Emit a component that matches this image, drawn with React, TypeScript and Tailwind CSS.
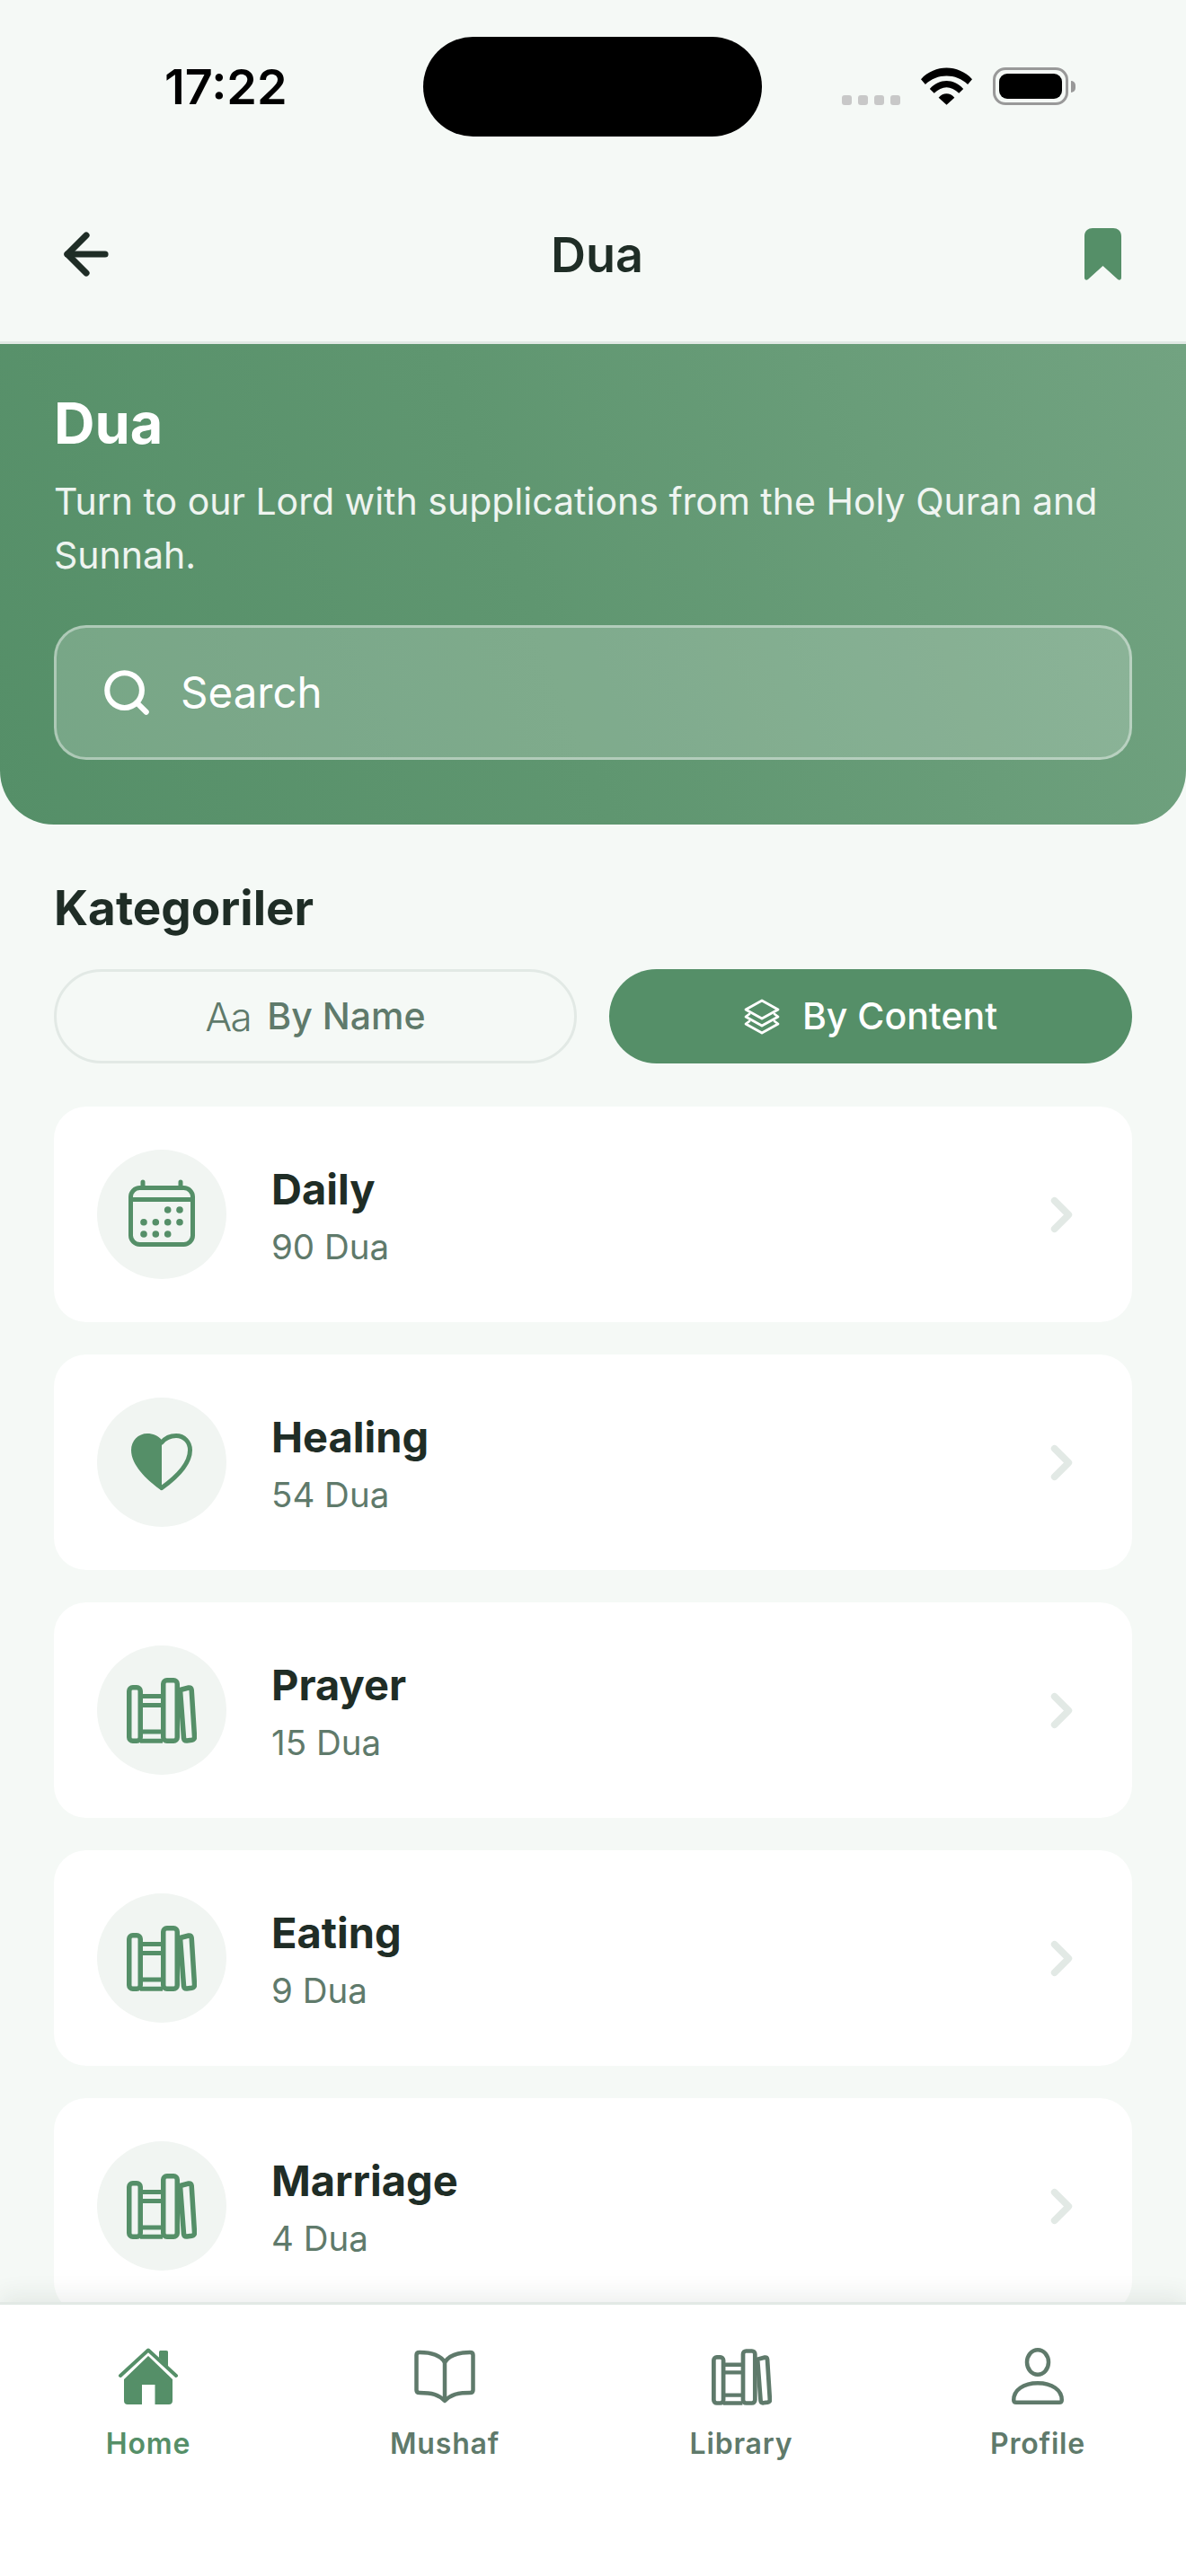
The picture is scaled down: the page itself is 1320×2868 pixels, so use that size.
import { ArrowLeft, ChevronRight, Search } from 'lucide-react';

const cards = [
  { name: 'Daily', count: '90 Dua', icon: 'calendar' },
  { name: 'Healing', count: '54 Dua', icon: 'heart' },
  { name: 'Prayer', count: '15 Dua', icon: 'books' },
  { name: 'Eating', count: '9 Dua', icon: 'books' },
  { name: 'Marriage', count: '4 Dua', icon: 'books' },
];

function CalendarIcon() {
  const dots = [
    [46.7, 35], [60, 35],
    [20, 48.7], [33.3, 48.7], [46.7, 48.7], [60, 48.7],
    [20, 62], [33.3, 62], [46.7, 62],
  ];
  return (
    <svg width="80" height="80" viewBox="0 0 80 80" fill="none" stroke="#558f68" strokeWidth="5">
      <rect x="5.5" y="10.5" width="69" height="63" rx="10" />
      <path d="M5.5 23.5H74.5" />
      <path d="M19 4V10M61 4V10" strokeLinecap="round" />
      {dots.map(([x, y]) => (
        <circle key={`${x}-${y}`} cx={x} cy={y} r="3.8" fill="#558f68" stroke="none" />
      ))}
    </svg>
  );
}

function HeartIcon() {
  return (
    <svg width="80" height="80" viewBox="0 0 80 80" fill="none">
      <path d="M40 15C36 10.500 30 8 24 8C14 8 6 16 6 26.500C6 43 23 59 37 69.500C38.800 70.900 40 71 40 71Z" fill="#558f68" />
      <path d="M40 18C44 13 49 10.500 56 10.500C65 10.500 71.500 17.500 71.500 26.500C71.500 42 56 57 40 68.500" stroke="#558f68" strokeWidth="5" strokeLinecap="round" />
    </svg>
  );
}

function BooksIcon({ color, width, height }: { color: string; width: number; height: number }) {
  return (
    <svg width={width} height={height} viewBox="0 0 78 73" fill="none" stroke={color} strokeWidth="5.500" strokeLinejoin="round">
      <rect x="2.750" y="10.750" width="12.500" height="59.500" rx="4" />
      <path d="M15 20.500H40M15 30.500H40M15 60H40M15 70.250H40" strokeWidth="5" />
      <rect x="40.750" y="2.750" width="15.500" height="67.500" rx="4" />
      <path d="M59.500 13.500L69 11C71 10.700 72 11.500 72.200 13.500L75.500 65.500C75.700 67.500 74.500 69 72.500 69.300L67 70C65 70.200 63.800 69 63.500 67Z" />
    </svg>
  );
}

function HomeIcon() {
  return (
    <svg width="68" height="64" viewBox="0 0 68 64" fill="none">
      <path d="M46 4.500C46 3.500 47 3 48 3H54C55.500 3 56 3.800 56 4.500V22L46 11Z" fill="#558f68" />
      <path d="M3 31L34 2.500L65 31" stroke="#558f68" strokeWidth="4" strokeLinecap="round" strokeLinejoin="round" />
      <path d="M34 9L61 35V59C61 61.500 59.500 63 57 63H41.500V41H27V63H11C8.500 63 7 61.500 7 59V35Z" fill="#558f68" />
    </svg>
  );
}

function BookIcon() {
  return (
    <svg width="68" height="60" viewBox="0 0 68 60" fill="none" stroke="#5f7a6b" strokeWidth="4.500" strokeLinejoin="round">
      <path d="M34 14C29 6 20 3 6 3C3.500 3 2.500 4 2.500 6V45C2.500 47 3.500 48 6 48C20 48 27 50 34 57C41 50 48 48 62 48C64.500 48 65.500 47 65.500 45V6C65.500 4 64.500 3 62 3C48 3 39 6 34 14Z" />
      <path d="M34 14V57" />
    </svg>
  );
}

function UserIcon() {
  return (
    <svg width="68" height="64" viewBox="0 0 68 64" fill="none" stroke="#5f7a6b" strokeWidth="4.500" strokeLinejoin="round">
      <ellipse cx="34" cy="16" rx="12" ry="13.750" />
      <path d="M7.250 58C7.250 47 18 39.250 34 39.250C50 39.250 60.750 47 60.750 58C60.750 60 59.500 60.750 58 60.750H10C8.500 60.750 7.250 60 7.250 58Z" />
    </svg>
  );
}

function CardIcon({ icon }: { icon: string }) {
  if (icon === 'calendar') return <CalendarIcon />;
  if (icon === 'heart') return <HeartIcon />;
  return <BooksIcon color="#558f68" width={78} height={73} />;
}

function StatusBar() {
  return (
    <div className="flex h-[186px] items-start pt-[41px] pl-[183px]">
      <span className="mt-[26px] w-[288px] text-[54px] leading-[60px] font-semibold text-black">17:22</span>
      <div className="h-[111px] w-[377px] rounded-full bg-black" />
      <div className="mt-[34px] ml-[89px] flex items-end">
        <div className="flex gap-[7px]">
          <div className="h-[11px] w-[11px] rounded-[3px] bg-[#c8c8c8]" />
          <div className="h-[11px] w-[11px] rounded-[3px] bg-[#c8c8c8]" />
          <div className="h-[11px] w-[11px] rounded-[3px] bg-[#c8c8c8]" />
          <div className="h-[11px] w-[11px] rounded-[3px] bg-[#c8c8c8]" />
        </div>
        <svg className="ml-[23px]" width="57" height="42" viewBox="0 0 58 42" fill="black">
          <path d="M0 13C16 -4 42 -4 58 13L53 19C40 6 18 6 5 19Z" />
          <path d="M10 24C21 12 37 12 48 24L43 29C34 20 24 20 15 29Z" />
          <path d="M20 34C25 28 33 28 38 34L29 42Z" />
        </svg>
        <div className="ml-[23px] flex items-center">
          <div className="h-[42px] w-[84px] rounded-[14px] border-[3px] border-[#999999] p-[4px]">
            <div className="h-full w-full rounded-[9px] bg-black" />
          </div>
          <div className="ml-[3px] h-[13px] w-[5px] rounded-r-full bg-[#999999]" />
        </div>
      </div>
    </div>
  );
}

export default function App() {
  return (
    <div className="flex h-[2868px] w-[1320px] flex-col overflow-hidden bg-[#f5f9f6] font-['Inter',sans-serif]">
      <StatusBar />
      <header className="flex h-[197px] items-center justify-between border-b-[3px] border-[#e2e9e5] pl-[60px] pr-[72px]">
        <ArrowLeft size={72} color="#1f2d26" strokeWidth={2.4} />
        <h1 className="text-[54px] font-semibold text-[#1f2d26]">Dua</h1>
        <div className="flex w-[51px] justify-end">
          <svg width="41" height="58" viewBox="0 0 41 58" fill="#558f68">
            <path d="M0 9C0 3.500 3.500 0 9 0H32C37.500 0 41 3.500 41 9V55C41 57.500 39 58.500 37 57L20.500 42L4 57C2 58.500 0 57.500 0 55Z" />
          </svg>
        </div>
      </header>

      <section className="h-[535px] rounded-b-[60px] bg-[linear-gradient(70deg,#558f68_0%,#5f9670_45%,#72a381_100%)] px-[60px] pt-[50px]">
        <h2 className="text-[63px] leading-[76px] font-bold text-white">Dua</h2>
        <p className="mt-[19px] text-[41px] leading-[60px] text-white/90">
          Turn to our Lord with supplications from the Holy Quran and Sunnah.
        </p>
        <div className="mt-[48px] flex h-[150px] items-center rounded-[36px] border-[3px] border-white/40 bg-white/20 pl-[49px]">
          <Search size={58} color="white" strokeWidth={2.5} />
          <span className="ml-[31px] text-[47.500px] text-white">Search</span>
        </div>
      </section>

      <main className="flex-1 overflow-hidden px-[60px] pt-[61px]">
        <h3 className="text-[53px] leading-[64px] font-bold text-[#1f2d26]">Kategoriler</h3>
        <div className="mt-[36px] grid grid-cols-2 gap-[36px]">
          <div className="flex h-[105px] items-center justify-center rounded-full border-[3px] border-[#e2e9e5] text-[41px] font-medium text-[#5f7a6b]">
            <span className="mr-[18px] text-[44px] font-light tracking-[-1.500px]">Aa</span>
            By Name
          </div>
          <div className="flex h-[105px] items-center justify-center rounded-full bg-[#558f68] text-[41px] font-medium text-white">
            <svg className="mr-[25px]" width="40" height="40" viewBox="0 0 40 40" fill="none" stroke="white" strokeWidth="2.800" strokeLinejoin="round" strokeLinecap="round">
              <path d="M20 2L38 12L20 22L2 12Z" />
              <path d="M6 17L2 20L20 30L38 20L34 17" />
              <path d="M6 25L2 28L20 38L38 28L34 25" />
            </svg>
            By Content
          </div>
        </div>
        <div className="mt-[48px] flex flex-col gap-[36px]">
          {cards.map((card) => (
            <div key={card.name} className="flex h-[240px] shrink-0 items-center rounded-[36px] bg-white pl-[48px] pr-[47px]">
              <div className="flex h-[144px] w-[144px] items-center justify-center rounded-full bg-[#f1f5f2]">
                <CardIcon icon={card.icon} />
              </div>
              <div className="mt-[4px] ml-[50px] flex-1">
                <div className="text-[47px] leading-[58px] font-bold text-[#1f2d26]">{card.name}</div>
                <div className="mt-[10px] text-[38.500px] leading-[50px] text-[#5f7a6b]">{card.count}</div>
              </div>
              <ChevronRight size={63} color="#e2e9e5" strokeWidth={2.9} />
            </div>
          ))}
        </div>
      </main>

      <nav className="relative grid h-[305px] shrink-0 grid-cols-4 border-t-[3px] border-[#e2e9e5] bg-white pt-[48px] shadow-[0_-8px_24px_rgba(31,45,38,0.08)]">
        {[
          { label: 'Home', icon: <HomeIcon />, active: true },
          { label: 'Mushaf', icon: <BookIcon />, active: false },
          { label: 'Library', icon: <BooksIcon color="#5f7a6b" width={67} height={63} />, active: false },
          { label: 'Profile', icon: <UserIcon />, active: false },
        ].map((item) => (
          <div key={item.label} className="flex flex-col items-center">
            <div className="flex h-[64px] items-center">{item.icon}</div>
            <span className={`mt-[21px] text-[32px] leading-[44px] font-semibold tracking-[0.8px] ${item.active ? 'text-[#558f68]' : 'text-[#5f7a6b]'}`}>
              {item.label}
            </span>
          </div>
        ))}
      </nav>
    </div>
  );
}
